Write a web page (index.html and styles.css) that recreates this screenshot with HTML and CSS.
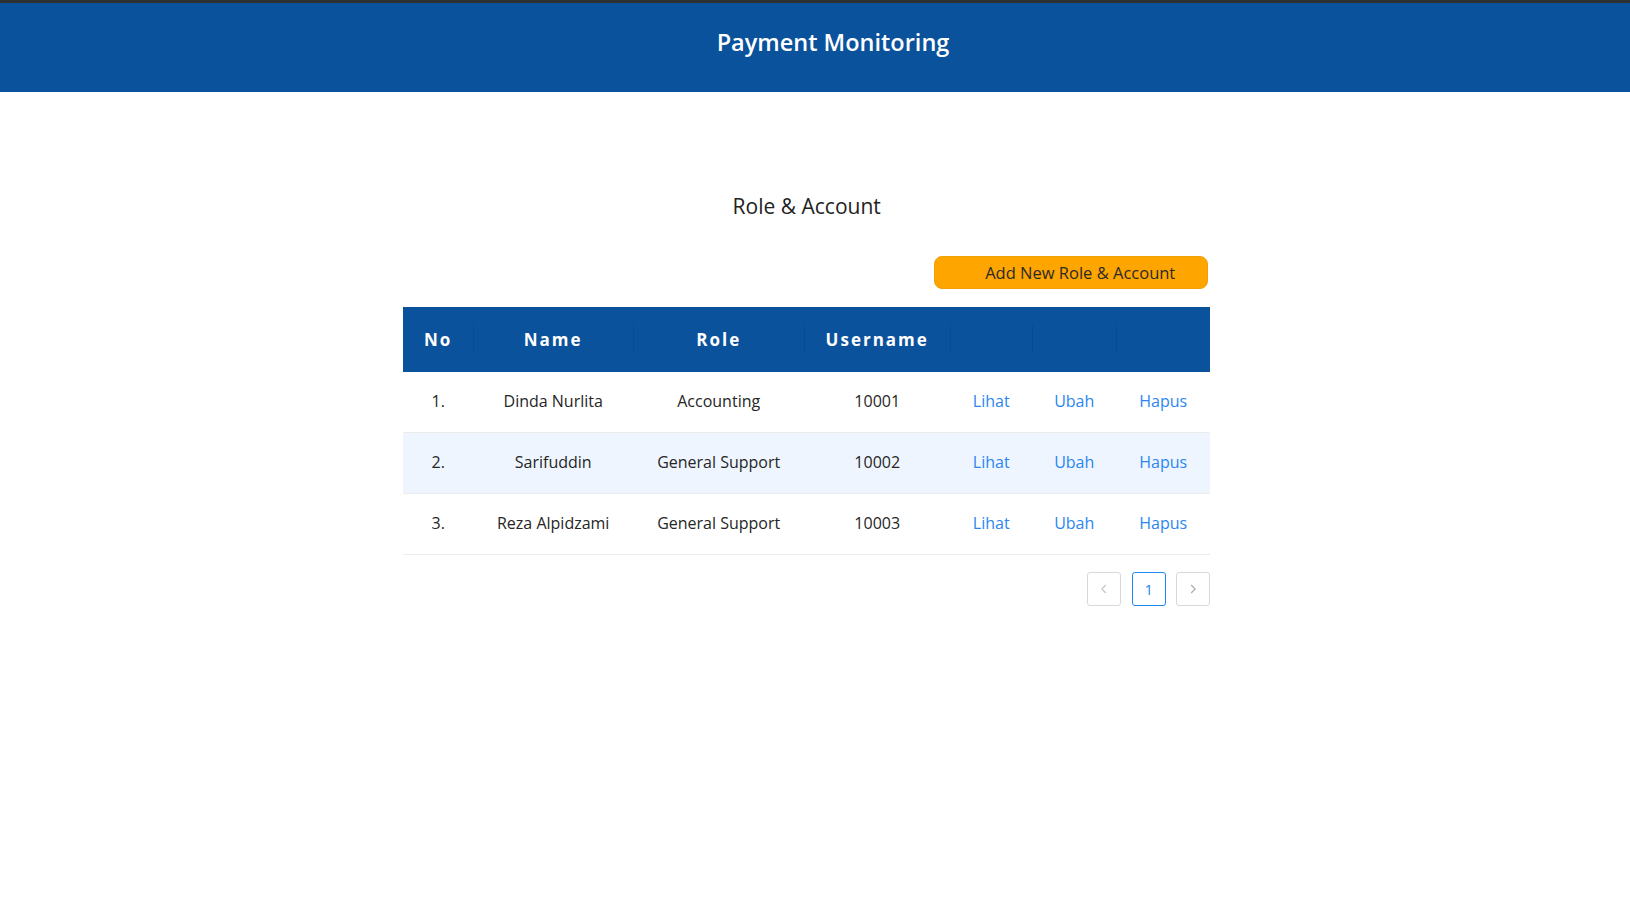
FILE: index.html
```html
<!DOCTYPE html>
<html lang="id">
<head>
<meta charset="utf-8">
<title>Payment Monitoring</title>
<link rel="stylesheet" href="styles.css">
</head>
<body>
<header class="app-header">
  <h1 class="app-title">Payment Monitoring</h1>
</header>
<main class="page">
  <section class="content">
    <h2 class="section-title">Role &amp; Account</h2>
    <div class="toolbar">
      <button class="btn-add" type="button">Add New Role &amp; Account</button>
    </div>
    <table class="data-table">
      <colgroup>
        <col class="c-no"><col class="c-name"><col class="c-role"><col class="c-user"><col class="c-a1"><col class="c-a2"><col class="c-a3">
      </colgroup>
      <thead>
        <tr>
          <th>No</th><th>Name</th><th>Role</th><th>Username</th><th></th><th></th><th></th>
        </tr>
      </thead>
      <tbody>
        <tr>
          <td>1.</td><td>Dinda Nurlita</td><td>Accounting</td><td>10001</td>
          <td><a class="act" href="#">Lihat</a></td><td><a class="act" href="#">Ubah</a></td><td><a class="act" href="#">Hapus</a></td>
        </tr>
        <tr class="alt">
          <td>2.</td><td>Sarifuddin</td><td>General Support</td><td>10002</td>
          <td><a class="act" href="#">Lihat</a></td><td><a class="act" href="#">Ubah</a></td><td><a class="act" href="#">Hapus</a></td>
        </tr>
        <tr>
          <td>3.</td><td>Reza Alpidzami</td><td>General Support</td><td>10003</td>
          <td><a class="act" href="#">Lihat</a></td><td><a class="act" href="#">Ubah</a></td><td><a class="act" href="#">Hapus</a></td>
        </tr>
      </tbody>
    </table>
    <nav class="pager">
      <span class="pg pg-nav">
        <svg width="12" height="12" viewBox="0 0 12 12"><path d="M7.8 2 L3.8 6 L7.8 10" fill="none" stroke="#c4c4c4" stroke-width="1.1"/></svg>
      </span>
      <span class="pg pg-active">1</span>
      <span class="pg pg-nav">
        <svg width="12" height="12" viewBox="0 0 12 12"><path d="M4.2 2 L8.2 6 L4.2 10" fill="none" stroke="#a8a8a8" stroke-width="1.1"/></svg>
      </span>
    </nav>
  </section>
</main>
</body>
</html>
```

FILE: styles.css
```css
html, body {
  margin: 0;
  padding: 0;
  background: #ffffff;
}
body {
  font-family: "Open Sans", "Noto Sans", sans-serif;
  color: #262626;
}
.app-header {
  border-top: 3px solid #2e2f31;
  background: #0a529c;
  height: 91.5px;
  display: flex;
  align-items: center;
  justify-content: center;
  padding-left: 36px;
  box-sizing: border-box;
}
.app-title {
  margin: 0;
  color: #ffffff;
  font-size: 23.5px;
  font-weight: 600;
  line-height: 1;
  padding-bottom: 9px;
  letter-spacing: 0;
}
.page {
  padding-right: 16.6px;
}
.content {
  width: 807px;
  margin: 0 auto;
  padding-top: 99px;
}
.section-title {
  margin: 0;
  text-align: center;
  font-size: 21px;
  font-weight: 500;
  line-height: 30px;
  color: #222;
}
.toolbar {
  display: flex;
  justify-content: flex-end;
  margin-top: 35px;
  padding-right: 2px;
}
.btn-add {
  width: 274px;
  height: 33.5px;
  background: #ffa500;
  border: 1px solid #f0a10a;
  border-radius: 8px;
  font-family: inherit;
  font-size: 16.5px;
  color: #2a2a2a;
  padding: 0 0 0 18px;
  text-align: center;
  cursor: pointer;
}
.data-table {
  margin-top: 17.5px;
  width: 807px;
  border-collapse: collapse;
  table-layout: fixed;
}
.c-no { width: 70px; }
.c-name { width: 160px; }
.c-role { width: 171px; }
.c-user { width: 146px; }
.c-a1 { width: 82px; }
.c-a2 { width: 84px; }
.c-a3 { width: 94px; }
.data-table thead th {
  background: #0a529c;
  color: #ffffff;
  height: 65px;
  padding: 0 8px;
  font-size: 17px;
  font-weight: 700;
  letter-spacing: 2px;
  text-align: center;
  position: relative;
}
.data-table thead th + th::before {
  content: "";
  position: absolute;
  left: 0;
  top: 50%;
  width: 1px;
  height: 28px;
  transform: translateY(-50%);
  background: rgba(0, 0, 0, 0.08);
}
.data-table tbody td {
  padding: 17.5px 6px;
  line-height: 25px;
  font-size: 16px;
  text-align: center;
  border-bottom: 1px solid #ececec;
  color: #262626;
  white-space: nowrap;
}
.data-table tbody tr.alt td {
  background: #eef5fe;
}
.act {
  color: #2b86f2;
  text-decoration: none;
}
.pager {
  display: flex;
  justify-content: flex-end;
  gap: 10.5px;
  margin-top: 17px;
}
.pg {
  width: 34px;
  height: 34px;
  box-sizing: border-box;
  border: 1px solid #d9d9d9;
  border-radius: 3px;
  display: flex;
  align-items: center;
  justify-content: center;
  font-size: 15px;
  color: #1e88f5;
}
.pg-active {
  border-color: #1e88f5;
}
```
